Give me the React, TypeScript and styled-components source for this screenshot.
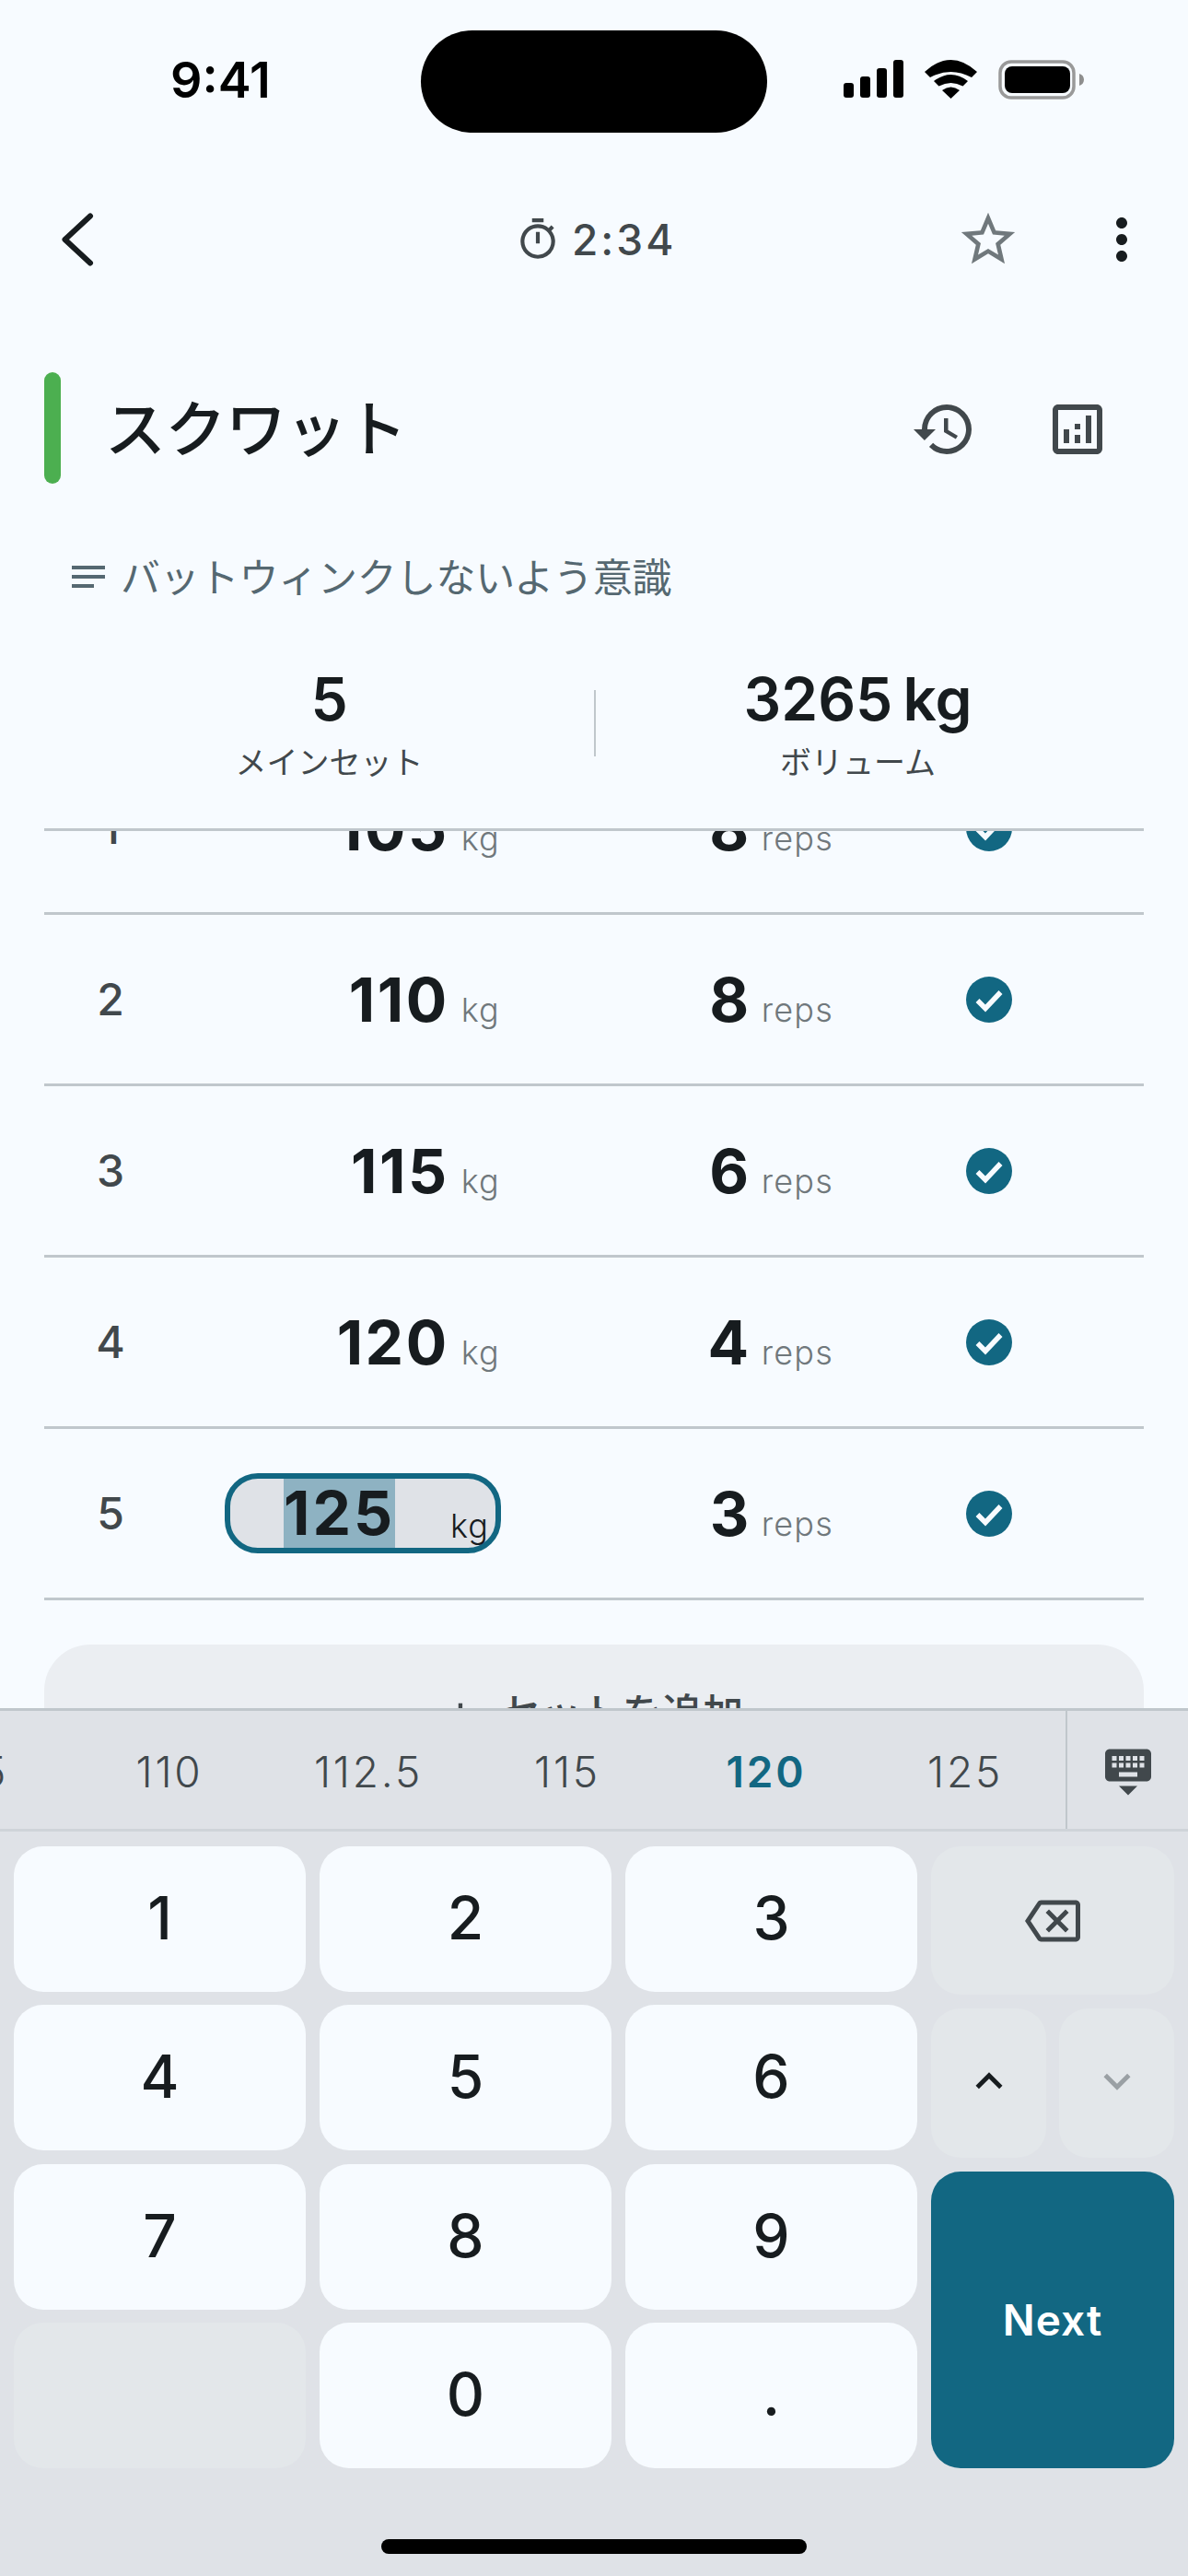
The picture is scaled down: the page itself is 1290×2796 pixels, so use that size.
import React from 'react'
import styled, { createGlobalStyle } from 'styled-components'
import {
  MdHistory,
  MdKeyboardArrowDown,
  MdKeyboardArrowUp,
  MdKeyboardHide,
  MdMoreVert,
  MdNotes,
  MdOutlineAnalytics,
  MdOutlineBackspace,
  MdOutlineTimer,
  MdStarBorder,
} from 'react-icons/md'

const palette = {
  bg: '#f7fbff',
  text: '#171c1f',
  secondary: '#41484c',
  hint: '#70787c',
  note: '#556871',
  line: '#c0c7cc',
  teal: '#126782',
  keyboard: '#dfe2e7',
  fnKey: '#e3e7ea',
  addBtn: '#ebeef2',
}

const SETS = [
  { no: 1, weight: '105', reps: 8 },
  { no: 2, weight: '110', reps: 8 },
  { no: 3, weight: '115', reps: 6 },
  { no: 4, weight: '120', reps: 4 },
  { no: 5, weight: '125', reps: 3, editing: true },
]

const SUGGESTIONS = ['105', '110', '112.5', '115', '120', '125']
const DIGITS = ['1', '2', '3', '4', '5', '6', '7', '8', '9', '', '0', '.']

export default function App() {
  return (
    <Screen>
      <GlobalStyle />

      <StatusBar>
        <Clock>9:41</Clock>
        <Island />
        <StatusIcons>
          <svg width="65" height="41" viewBox="0 0 65 41" fill="#000">
            <rect x="0" y="25" width="11" height="16" rx="3" />
            <rect x="18" y="18" width="11" height="23" rx="3" />
            <rect x="36" y="9" width="11" height="32" rx="3" />
            <rect x="54" y="0" width="11" height="41" rx="3" />
          </svg>
          <svg width="57" height="42" viewBox="0 0 57 42" fill="#000">
            <path d="M0 13Q28.5-13 57 13L51 19Q28.5 7 6 19Z" />
            <path d="M10 23Q28.5 9 47 23L41.500 28.500Q28.500 21.500 15.500 28.500Z" />
            <path d="M19 33Q28.500 26 38 33L28.500 42Z" />
          </svg>
          <svg width="93" height="43" viewBox="0 0 93 43">
            <rect x="2" y="2" width="80" height="39" rx="12" fill="none" stroke="#999" strokeWidth="3.500" />
            <rect x="7" y="7" width="71" height="29" rx="8" fill="#000" />
            <path d="M88 15c3 1 5 3 5 6.500s-2 5.500-5 6.500z" fill="#8e8e8e" />
          </svg>
        </StatusIcons>
      </StatusBar>

      <NavBar>
        <svg width="36" height="58" viewBox="0 0 36 58" fill="none">
          <path d="M32 3.500L4.500 29L32 54.500" stroke={palette.text} strokeWidth="6" strokeLinecap="round" strokeLinejoin="round" />
        </svg>
        <Timer>
          <MdOutlineTimer size={50} />
          <TimerText>2:34</TimerText>
        </Timer>
        <NavActions>
          <StarIcon size={70} />
          <MoreIcon size={72} />
        </NavActions>
      </NavBar>

      <TitleRow>
        <ColorBar />
        <Title>スクワット</Title>
        <TitleActions>
          <MdHistory size={72} />
          <MdOutlineAnalytics size={72} />
        </TitleActions>
      </TitleRow>

      <NoteRow>
        <MdNotes size={48} />
        <NoteText>バットウィンクしないよう意識</NoteText>
      </NoteRow>

      <Stats>
        <Stat>
          <StatValue>5</StatValue>
          <StatLabel>メインセット</StatLabel>
        </Stat>
        <StatDivider />
        <Stat>
          <StatValue>3265 kg</StatValue>
          <StatLabel>ボリューム</StatLabel>
        </Stat>
      </Stats>

      <ListArea>
        <ScrolledList>
          {SETS.map((set) => (
            <SetRow key={set.no}>
              <SetNumber>{set.no}</SetNumber>
              <WeightCell>
                {set.editing ? (
                  <WeightField>
                    <Selection>{set.weight}</Selection>
                    <FieldUnit>kg</FieldUnit>
                  </WeightField>
                ) : (
                  <>
                    <BigValue>{set.weight}</BigValue>
                    <Unit>kg</Unit>
                  </>
                )}
              </WeightCell>
              <RepsCell>
                <BigValue>{set.reps}</BigValue>
                <Unit>reps</Unit>
              </RepsCell>
              <CheckCell>
                <svg width="50" height="50" viewBox="0 0 50 50">
                  <circle cx="25" cy="25" r="25" fill={palette.teal} />
                  <path d="M12.500 26L21 34.500L37.500 17" fill="none" stroke={palette.bg} strokeWidth="5.500" />
                </svg>
              </CheckCell>
            </SetRow>
          ))}
          <AddButton>
            <AddPlus>+</AddPlus>
            セットを追加
          </AddButton>
        </ScrolledList>
      </ListArea>

      <Keyboard>
        <SuggestionBar>
          <SuggestionScroller>
            {SUGGESTIONS.map((value) => (
              <Suggestion key={value} $active={value === '120'}>
                {value}
              </Suggestion>
            ))}
          </SuggestionScroller>
          <HideKey>
            <MdKeyboardHide size={60} />
          </HideKey>
        </SuggestionBar>

        <Keys>
          <DigitGrid>
            {DIGITS.map((digit, i) => (
              <DigitKey key={i} $blank={digit === ''}>
                {digit}
              </DigitKey>
            ))}
          </DigitGrid>
          <FnColumn>
            <BackspaceKey>
              <MdOutlineBackspace size={60} />
            </BackspaceKey>
            <ArrowRow>
              <ArrowKey>
                <MdKeyboardArrowUp size={58} />
              </ArrowKey>
              <ArrowKey $disabled>
                <MdKeyboardArrowDown size={58} />
              </ArrowKey>
            </ArrowRow>
            <NextKey>Next</NextKey>
          </FnColumn>
        </Keys>

        <HomeArea>
          <HomeIndicator />
        </HomeArea>
      </Keyboard>
    </Screen>
  )
}

const GlobalStyle = createGlobalStyle`
  html, body {
    margin: 0;
    padding: 0;
    background: ${palette.bg};
  }
  * {
    box-sizing: border-box;
  }
`

const Screen = styled.div`
  display: flex;
  flex-direction: column;
  width: 1290px;
  height: 2796px;
  overflow: hidden;
  background: ${palette.bg};
  color: ${palette.text};
  font-family: Inter, 'Noto Sans CJK JP', sans-serif;
`

const StatusBar = styled.div`
  position: relative;
  display: flex;
  justify-content: space-between;
  align-items: flex-start;
  flex: none;
  height: 175px;
  padding: 65px 113px 0 185px;
`

const Clock = styled.span`
  font-size: 54px;
  line-height: 44px;
  font-weight: 600;
  color: #000;
`

const Island = styled.div`
  position: absolute;
  left: 457px;
  top: 33px;
  width: 376px;
  height: 111px;
  border-radius: 56px;
  background: #000;
`

const StatusIcons = styled.div`
  display: flex;
  align-items: flex-start;
  gap: 23px;
`

const NavBar = styled.div`
  display: flex;
  align-items: center;
  justify-content: space-between;
  flex: none;
  position: relative;
  height: 175px;
  padding: 0 36px 5px 66px;
`

const Timer = styled.div`
  position: absolute;
  left: 559px;
  display: flex;
  align-items: center;
  gap: 12px;
  color: ${palette.secondary};
`

const TimerText = styled.span`
  font-size: 46px;
  font-weight: 500;
  letter-spacing: 3px;
`

const NavActions = styled.div`
  display: flex;
  align-items: center;
  gap: 74px;
`

const StarIcon = styled(MdStarBorder)`
  margin-left: 2px;
  color: ${palette.hint};
`

const MoreIcon = styled(MdMoreVert)`
  color: ${palette.text};
`

const TitleRow = styled.div`
  display: flex;
  align-items: center;
  flex: none;
  height: 232px;
  padding: 0 84px 0 48px;
`

const ColorBar = styled.div`
  width: 18px;
  height: 121px;
  margin-bottom: 3px;
  border-radius: 9px;
  background: #4caf50;
`

const Title = styled.h1`
  flex: 1;
  margin: 0 0 10px 48px;
  font-size: 66px;
  font-weight: 500;
  letter-spacing: -0.5px;
  color: ${palette.text};
`

const TitleActions = styled.div`
  display: flex;
  align-items: center;
  gap: 73px;
  color: ${palette.secondary};
`

const NoteRow = styled.div`
  display: flex;
  align-items: center;
  flex: none;
  gap: 11px;
  height: 88px;
  padding-left: 72px;
  color: ${palette.note};
`

const NoteText = styled.span`
  margin-bottom: 4px;
  font-size: 43px;
  font-weight: 400;
  letter-spacing: -0.2px;
`

const Stats = styled.div`
  display: grid;
  grid-template-columns: 645px 2px 1fr;
  align-items: center;
  flex: none;
  height: 229px;
`

const Stat = styled.div`
  display: flex;
  flex-direction: column;
  align-items: center;

  &:first-child {
    margin-right: -70px;
  }
  &:last-child {
    margin-right: 74px;
  }
`

const StatValue = styled.div`
  font-size: 64px;
  line-height: 80px;
  font-weight: 600;
  word-spacing: -5px;
`

const StatLabel = styled.div`
  margin-top: 6px;
  font-size: 34px;
  line-height: 46px;
  color: ${palette.secondary};
`

const StatDivider = styled.div`
  width: 2px;
  height: 72px;
  background: ${palette.line};
`

const ListArea = styled.div`
  flex: 1;
  min-height: 0;
  overflow: hidden;
`

const ScrolledList = styled.div`
  position: relative;
  margin-top: -92px;
  padding: 0 48px;

  &::before {
    content: '';
    position: absolute;
    z-index: 1;
    left: 48px;
    right: 48px;
    top: 92px;
    height: 3px;
    background: ${palette.line};
  }
`

const SetRow = styled.div`
  display: grid;
  grid-template-columns: 144px 351px 362px 1fr;
  align-items: center;
  height: 186px;
  border-bottom: 3px solid ${palette.line};
`

const SetNumber = styled.div`
  text-align: center;
  font-size: 48px;
  font-weight: 500;
  color: ${palette.secondary};
`

const WeightCell = styled.div`
  display: flex;
  justify-content: flex-end;
  align-items: baseline;
  gap: 13px;
`

const RepsCell = styled(WeightCell)`
  gap: 11px;
`

const BigValue = styled.span`
  font-size: 66px;
  line-height: 80px;
  font-weight: 700;
  letter-spacing: 2.500px;
  color: ${palette.text};
`

const Unit = styled.span`
  font-size: 36px;
  font-weight: 300;
  letter-spacing: 1.200px;
  color: ${palette.hint};
`

const WeightField = styled.div`
  display: flex;
  justify-content: space-between;
  width: 300px;
  height: 87px;
  margin-right: -1px;
  padding: 0 7px 0 58px;
  border: 6px solid ${palette.teal};
  border-radius: 36px;
  background: ${palette.keyboard};
`

const Selection = styled.span`
  width: 121px;
  background: #8eb2c2;
  text-align: center;
  font-size: 66px;
  line-height: 75px;
  font-weight: 700;
  letter-spacing: 3px;
  color: ${palette.text};
`

const FieldUnit = styled.span`
  align-self: flex-end;
  font-size: 36px;
  font-weight: 300;
  line-height: 48px;
  letter-spacing: 1px;
  color: ${palette.text};
`

const CheckCell = styled.div`
  display: flex;
  justify-content: center;
  align-items: center;
`

const AddButton = styled.div`
  display: flex;
  justify-content: center;
  align-items: center;
  gap: 26px;
  height: 144px;
  margin-top: 48px;
  border-radius: 50px;
  background: ${palette.addBtn};
  font-size: 44px;
  font-weight: 500;
  color: ${palette.secondary};
`

const AddPlus = styled.span`
  font-size: 52px;
  font-weight: 400;
`

const Keyboard = styled.div`
  flex: none;
  background: ${palette.keyboard};
`

const SuggestionBar = styled.div`
  display: flex;
  height: 134px;
  border-top: 3px solid ${palette.line};
  border-bottom: 3px solid #cfd4d9;
`

const SuggestionScroller = styled.div`
  display: flex;
  flex: none;
  width: 1157px;
  overflow: hidden;
`

const Suggestion = styled.div<{ $active?: boolean }>`
  display: flex;
  flex: none;
  align-items: center;
  justify-content: center;
  width: 216px;
  padding-top: 3px;
  font-size: 46px;
  font-weight: ${(p) => (p.$active ? 600 : 300)};
  letter-spacing: 2.800px;
  color: ${(p) => (p.$active ? palette.teal : palette.secondary)};

  &:first-child {
    margin-left: -140px;
  }
`

const HideKey = styled.div`
  display: flex;
  flex: 1;
  align-items: center;
  justify-content: center;
  border-left: 2px solid ${palette.line};
  color: ${palette.secondary};
`

const Keys = styled.div`
  display: flex;
  gap: 15px;
  padding: 16px 15px 0;
`

const DigitGrid = styled.div`
  display: grid;
  grid-template-columns: repeat(3, 317px);
  grid-auto-rows: 158px;
  gap: 14.330px 15px;
`

const DigitKey = styled.div<{ $blank?: boolean }>`
  display: flex;
  align-items: center;
  justify-content: center;
  padding-bottom: 3px;
  border-radius: 32px;
  background: ${(p) => (p.$blank ? palette.fnKey : palette.bg)};
  font-size: 64px;
  font-weight: 450;
  color: ${palette.text};
`

const FnColumn = styled.div`
  display: flex;
  flex: 1;
  flex-direction: column;
  gap: 15px;
`

const BackspaceKey = styled.div`
  display: flex;
  flex: none;
  align-items: center;
  justify-content: center;
  height: 161px;
  border-radius: 32px;
  background: ${palette.fnKey};
  color: ${palette.secondary};
`

const ArrowRow = styled.div`
  display: flex;
  flex: none;
  gap: 14px;
  height: 162px;
`

const ArrowKey = styled.div<{ $disabled?: boolean }>`
  display: flex;
  flex: 1;
  align-items: center;
  justify-content: center;
  padding-bottom: 4px;
  border-radius: 32px;
  background: ${palette.fnKey};
  color: ${(p) => (p.$disabled ? '#9aa0a4' : palette.text)};
`

const NextKey = styled.div`
  display: flex;
  flex: 1;
  align-items: center;
  justify-content: center;
  border-radius: 32px;
  background: ${palette.teal};
  font-size: 46px;
  font-weight: 600;
  letter-spacing: 1px;
  color: #fff;
`

const HomeArea = styled.div`
  display: flex;
  justify-content: center;
  padding: 77px 0 24px;
`

const HomeIndicator = styled.div`
  width: 462px;
  height: 16px;
  border-radius: 8px;
  background: #000;
`
